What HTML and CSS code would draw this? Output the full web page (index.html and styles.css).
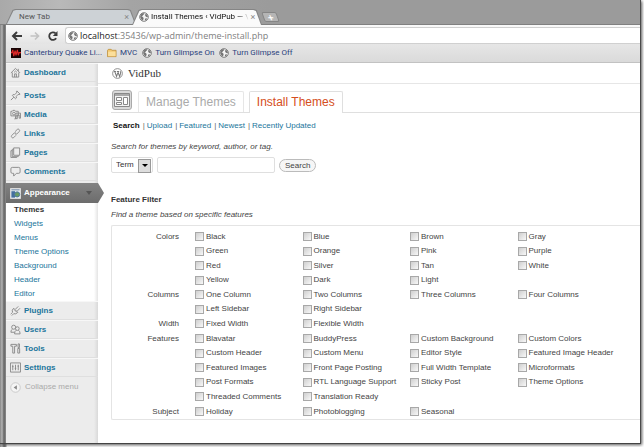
FILE: index.html
```html
<!DOCTYPE html>
<html lang="en">
<head>
<meta charset="utf-8">
<title>Install Themes ‹ VidPub — WordPress</title>
<link rel="stylesheet" href="styles.css">
</head>
<body>
<svg width="0" height="0" class="defs" aria-hidden="true">
  <symbol id="globe" viewBox="0 0 12 12">
    <circle cx="6" cy="6" r="5.2" fill="#f4f4f4" stroke="#6b6b6b" stroke-width="1"/>
    <path d="M2 3.2 4 1.6 6.4 1.5 6 3 4.6 3.6 4.4 5 2.8 5.3 5 6.4 5.6 8 4.4 10.4 2.6 8.6 1.4 6zM7.6 2 9.6 3 10.8 5.4 9.8 6.4 8.4 5.8 7.4 4.4zM8 7.4 9.8 7.8 8.6 9.8 7.4 10.2 7 8.6z" fill="#757575"/>
  </symbol>
</svg>
<div class="window">
  <header class="tabstrip">
    <div class="tab"><span>New Tab</span><button aria-label="Close New Tab">×</button></div>
    <div class="tab active"><svg class="ic"><use href="#globe"/></svg><span class="cut">Install Themes ‹ VidPub — \</span><button aria-label="Close tab">×</button></div>
    <button class="newtab" aria-label="New tab">+</button>
  </header>
  <div class="toolbar">
    <button aria-label="Back"><svg viewBox="0 0 12 12"><path d="M11 6H2.5M6 2 2 6l4 4" fill="none" stroke="#3c3c3c" stroke-width="2"/></svg></button>
    <button aria-label="Forward"><svg viewBox="0 0 12 12"><path d="M1.500 6H9M6 2.500 9.500 6 6 9.500" fill="none" stroke="#c2c2c2" stroke-width="1.700"/></svg></button>
    <button aria-label="Reload"><svg viewBox="0 0 12 12"><path d="M9.200 8.200A3.800 3.800 0 1 1 8.600 3.300" fill="none" stroke="#3c3c3c" stroke-width="1.800"/><path d="M10.500 1v5H5.800z" fill="#3c3c3c"/></svg></button>
    <div class="omnibox"><svg class="ic"><use href="#globe"/></svg><div class="url"><b>localhost</b>:35436/wp-admin/theme-install.php</div></div>
  </div>
  <nav class="bookmarks" aria-label="Bookmarks">
    <a href="#"><svg class="ic" viewBox="0 0 11 11"><path d="M0 0h11v11H0z" fill="#180404"/><path d="M0 5h1l1-3 1 7 1.500-6 1 5L7 2l1 6 1-3h2" fill="none" stroke="#e02828" stroke-width="1.300"/></svg>Canterbury Quake Li...</a>
    <a href="#"><svg class="ic" viewBox="0 0 11 11"><path d="M.5 9.500v-7l1-1h3l1 1h4.500v7z" fill="#f2c66c" stroke="#b98a35" stroke-width=".8"/><path d="M1.200 4h8.200v5H1.200z" fill="#fbdf9b"/></svg>MVC</a>
    <a href="#"><svg class="ic"><use href="#globe"/></svg>Turn Glimpse On</a>
    <a href="#"><svg class="ic"><use href="#globe"/></svg>Turn Glimpse Off</a>
  </nav>
  <div class="page">
    <nav class="menu" aria-label="Admin menu">
      <a href="#" class="item first"><svg viewBox="0 0 12 12"><path d="M1 6.500 6 1.500l5 5M2.500 6v5h7V6M5 11V7.500h2V11M9 2v2.500M4.500 5.800 6 4.400l1.500 1.400" /></svg>Dashboard</a>
      <a href="#" class="item"><svg viewBox="0 0 12 12"><path d="M7.500 1 11 4.500 9.800 5 8.800 4.800 6.800 7l.2 1.700-1 .8-3.500-3.500.8-1 1.700.2L7.200 3 7 2zM4.200 7.800 1 11"/></svg>Posts</a>
      <a href="#" class="item"><svg viewBox="0 0 12 12"><path d="M1 2.500h1.500l.7-1h2l.7 1H9v5H1zM6 8v2.800H4.800M6.500 10.500V4.500h5v5.500H10V6.500H8v4H6.500"/><circle cx="4.300" cy="5" r="1.500"/></svg>Media</a>
      <a href="#" class="item"><svg viewBox="0 0 12 12"><path d="M5.500 4 8 1.500q1-.8 2 .2t.2 2L7.500 6.500q-1 .8-2-.2M6.500 8 4 10.500q-1 .8-2-.2t-.2-2L4.500 5.500q1-.8 2 .2"/></svg>Links</a>
      <a href="#" class="item"><svg viewBox="0 0 12 12"><path d="M4 1h6.500v8H4zM4 2.500H2.500v8H9V9M2.500 4H1v7.500h6.500"/></svg>Pages</a>
      <a href="#" class="item"><svg viewBox="0 0 12 12"><path d="M2.500 1.500h7q1.500 0 1.500 1.500v3.500Q11 8 9.500 8H7l-3 3V8H2.500Q1 8 1 6.500V3q0-1.500 1.500-1.500z"/></svg>Comments</a>
      <a href="#" class="item current"><svg viewBox="0 0 12 12"><path d="M.5 .5h11v11H.5z" style="fill:#e8eef2;stroke:#ddd"/><path d="M1.500 3.500h4v7h-4z" style="fill:#436e9e;stroke:none"/><circle cx="7.800" cy="7" r="2.800" style="fill:#689b63;stroke:#4d76a5"/><path d="M1.500 2h9" style="stroke:#667f9c"/></svg>Appearance<i></i></a>
      <ul class="sub">
        <li><a href="#" class="on">Themes</a></li>
        <li><a href="#">Widgets</a></li>
        <li><a href="#">Menus</a></li>
        <li><a href="#">Theme Options</a></li>
        <li><a href="#">Background</a></li>
        <li><a href="#">Header</a></li>
        <li><a href="#">Editor</a></li>
      </ul>
      <a href="#" class="item"><svg viewBox="0 0 12 12"><path d="M4 3.500 8.500 8Q6.500 10.500 4 9.500L2 11.500M4 3.500Q1.500 5.500 2.800 8L.8 10M6 4.500l3-3M8 6.500l3-3M4.500 5l3 3"/></svg>Plugins</a>
      <a href="#" class="item"><svg viewBox="0 0 12 12"><circle cx="4" cy="3.500" r="2.200"/><circle cx="8" cy="5" r="2"/><path d="M2.800 5.500Q.8 6.500 1 9h4M6.800 6.800Q4.800 8 5 10.800h6Q11.200 8 9.200 6.800"/></svg>Users</a>
      <a href="#" class="item"><svg viewBox="0 0 12 12"><path d="M1 3.500V1.500h6v2H5v7.500H3V3.500zM8.800 1h1.500v4H8.800zM8.500 6h2v5h-2z"/></svg>Tools</a>
      <a href="#" class="item"><svg viewBox="0 0 12 12"><path d="M.5 1h11v10H.5zM3 3v6M6 3v6M9 3v6M2.200 5h1.600M5.200 7h1.600M8.200 4.500h1.600"/></svg>Settings</a>
      <button class="collapse"><svg viewBox="0 0 12 12"><circle cx="6" cy="6" r="5.200" style="fill:#f5f5f5;stroke:#c8c8c8"/><path d="M7.500 3.500v5L4 6z" style="fill:#888;stroke:none"/></svg>Collapse menu</button>
    </nav>
    <main>
      <div class="site"><svg viewBox="0 0 12 12"><circle cx="6" cy="6" r="5.300" fill="#fff" stroke="#777" stroke-width=".9"/><path d="M2 3.800h2.300M3 3.800l2 5.400L6.200 5.600M5.300 3.800h2.400M6.300 3.800l2 5.400L9.500 5.500Q9.500 4.400 8.800 3.500" fill="none" stroke="#777" stroke-width="1.100"/></svg>VidPub</div>
      <h1 class="heads">
        <svg viewBox="0 0 20 20"><rect x=".5" y=".5" width="19" height="19" rx="2.500" fill="#d9d9d9" stroke="#aaa"/><path d="M2.500 3.500h15v13h-15z" fill="#f4f4f4" stroke="#888"/><path d="M3 4h14v2H3z" fill="#aaa"/><path d="M4.500 7.500h5v3h-5zM4.500 12.500h5v2h-5zM11.500 7.500h4v7h-4z" fill="#fff" stroke="#888"/></svg>
        <a href="#">Manage Themes</a><a href="#" class="on">Install Themes</a>
      </h1>
      <ul class="views">
        <li><a href="#" class="on">Search</a></li><li><a href="#">Upload</a></li><li><a href="#">Featured</a></li><li><a href="#">Newest</a></li><li><a href="#">Recently Updated</a></li>
      </ul>
      <p>Search for themes by keyword, author, or tag.</p>
      <form class="search">
        <span class="drop"><select aria-label="Search type"><option>Term</option><option>Author</option><option>Tag</option></select></span>
        <input type="text" aria-label="Search themes">
        <button type="button">Search</button>
      </form>
      <h2>Feature Filter</h2>
      <p>Find a theme based on specific features</p>
      <div class="filter">
        <section><h3>Colors</h3><div class="opts">
          <label><input type="checkbox">Black</label><label><input type="checkbox">Blue</label><label><input type="checkbox">Brown</label><label><input type="checkbox">Gray</label>
          <label><input type="checkbox">Green</label><label><input type="checkbox">Orange</label><label><input type="checkbox">Pink</label><label><input type="checkbox">Purple</label>
          <label><input type="checkbox">Red</label><label><input type="checkbox">Silver</label><label><input type="checkbox">Tan</label><label><input type="checkbox">White</label>
          <label><input type="checkbox">Yellow</label><label><input type="checkbox">Dark</label><label><input type="checkbox">Light</label>
        </div></section>
        <section><h3>Columns</h3><div class="opts">
          <label><input type="checkbox">One Column</label><label><input type="checkbox">Two Columns</label><label><input type="checkbox">Three Columns</label><label><input type="checkbox">Four Columns</label>
          <label><input type="checkbox">Left Sidebar</label><label><input type="checkbox">Right Sidebar</label>
        </div></section>
        <section><h3>Width</h3><div class="opts">
          <label><input type="checkbox">Fixed Width</label><label><input type="checkbox">Flexible Width</label>
        </div></section>
        <section><h3>Features</h3><div class="opts">
          <label><input type="checkbox">Blavatar</label><label><input type="checkbox">BuddyPress</label><label><input type="checkbox">Custom Background</label><label><input type="checkbox">Custom Colors</label>
          <label><input type="checkbox">Custom Header</label><label><input type="checkbox">Custom Menu</label><label><input type="checkbox">Editor Style</label><label><input type="checkbox">Featured Image Header</label>
          <label><input type="checkbox">Featured Images</label><label><input type="checkbox">Front Page Posting</label><label><input type="checkbox">Full Width Template</label><label><input type="checkbox">Microformats</label>
          <label><input type="checkbox">Post Formats</label><label><input type="checkbox">RTL Language Support</label><label><input type="checkbox">Sticky Post</label><label><input type="checkbox">Theme Options</label>
          <label><input type="checkbox">Threaded Comments</label><label><input type="checkbox">Translation Ready</label>
        </div></section>
        <section><h3>Subject</h3><div class="opts">
          <label><input type="checkbox">Holiday</label><label><input type="checkbox">Photoblogging</label><label><input type="checkbox">Seasonal</label>
        </div></section>
      </div>
    </main>
  </div>
</div>
</body>
</html>
```
FILE: styles.css
```css
* { box-sizing: border-box; }
html { min-height: 100%; background: linear-gradient(90deg, #858585, #b4b4b4 2px, #636363 4px, #8c8c8c 6px, #fff 7px); }
body { margin: 0; font: 8px/14px "Liberation Sans", Arial, sans-serif; color: #444; }
a { color: #21759b; text-decoration: none; }
button { font: inherit; color: inherit; background: none; border: 0; padding: 0; }
ul, p, h1, h2, h3 { margin: 0; padding: 0; list-style: none; font-size: 8px; }
.defs { display: block; }
.ic { width: 10px; height: 10px; flex: none; }

.window {
  display: flex; flex-direction: column;
  min-height: calc(100vh - 3px);
  margin: 0 3px 3px 0; padding-left: 6px;
  border-right: 1px solid #4a4a4a; border-bottom: 1px solid #444;
  box-shadow: 1px 1px 3px #555;
}

.tabstrip {
  display: flex; align-items: flex-end;
  height: 25px; margin-left: -6px; padding-left: 6px;
  background: linear-gradient(90deg, #a9a9a9, #b9b9b9 60px, #a4a4a4 130px, #9b9b9b 270px, #9b9b9b);
  border-bottom: 1px solid #808080;
  font: 8px/14px Roboto, sans-serif;
}
.tab {
  position: relative; isolation: isolate;
  display: flex; align-items: center;
  width: 130px; height: 15px; padding: 0 7px 0 13px;
  color: #555;
}
.tab::before, .tab::after { content: ""; position: absolute; z-index: -1; inset: 0; clip-path: polygon(0 100%, 5% 6%, 7% 0, 94% 0, 96% 6%, 100% 100%); }
.tab::before { background: #858585; }
.tab::after { background: #cdd2d6; inset: 1px 1px 0; }
.tab span { flex: 1; }
.tab button { color: #888; font-size: 9px; line-height: 14px; }
.tab.active { height: 16px; margin: 0 0 -1px -4px; padding: 0 8px 0 7px; gap: 2px; color: #111; }
.tab.active::after { background: #fafafa; }
.cut { white-space: nowrap; mask-image: linear-gradient(90deg, #000 90%, transparent); }
.newtab { width: 15px; height: 10px; margin: 0 0 2px 1px; border: 1px solid #858585; border-radius: 2px; background: #b5b5b5; color: #fff; font: bold 10px/7px "Liberation Sans", sans-serif; transform: skewX(20deg); }

.toolbar { display: flex; align-items: center; height: 19px; padding: 2px 0 0 5px; gap: 6px; background: linear-gradient(#fafafa, #e4e4e4); }
.toolbar button { display: flex; }
.toolbar button svg { width: 12px; height: 12px; }
.omnibox { display: flex; align-items: center; flex: 1; height: 17px; padding-left: 2px; gap: 2px; background: #fff; border: 1px solid #d0d0d0; border-right: 0; border-radius: 3px 0 0 3px; }
.url { font: 9px/14px "Open Sans", sans-serif; color: #808080; }
.url b { font-weight: 400; color: #222; }

.bookmarks { display: flex; align-items: center; height: 19px; padding-left: 5px; gap: 5px; background: linear-gradient(#e6e6e6, #dadada); border-bottom: 1px solid #c2c2c2; font: 8px/14px Roboto, sans-serif; }
.bookmarks a { display: flex; align-items: center; gap: 3px; color: #2a3f7c; }

.page { flex: 1; display: grid; grid-template-columns: 92px 1fr; background: #fff; }

.menu { background: linear-gradient(90deg, #ececec 88px, #d9d9d9); }
.item { position: relative; display: flex; align-items: center; gap: 3px; height: 19px; padding-left: 4px; font-weight: 700; border-top: 1px solid #f7f7f7; border-bottom: 1px solid #dfdfdf; }
.menu svg { width: 11px; height: 11px; fill: none; stroke: #888; stroke-width: 1; }
.first { margin-bottom: 4px; }
.current { height: 20px; margin-top: 2px; color: #fff; background: linear-gradient(#838383, #6c6c6c); border: 0; }
.current::after { content: ""; position: absolute; left: 100%; top: 0; bottom: 0; width: 6px; background: linear-gradient(#838383, #6c6c6c); clip-path: polygon(0 0, 100% 50%, 0 100%); }
.current i { margin: 0 6px 0 auto; border: 3px solid transparent; border-top: 4px solid #555; border-bottom: 0; }
.sub { padding-left: 8px; background: linear-gradient(90deg, #fff 88px, #e4e4e4); }
.sub a { display: block; }
.sub .on { font-weight: 700; color: #333; }
.collapse { display: flex; align-items: center; gap: 4px; height: 20px; padding-left: 4px; color: #aaa; }

main { min-width: 0; padding-left: 13px; }
.site { display: flex; align-items: center; gap: 5px; height: 21px; margin-left: -13px; padding-left: 14px; border-bottom: 1px solid #e6e6e6; font: 11px/14px "Liberation Serif", Georgia, serif; color: #333; }
.site svg { width: 11px; height: 11px; }
.heads { display: flex; align-items: flex-end; height: 29px; border-bottom: 1px solid #dfdfdf; font: 400 12px/20px "Liberation Sans", Arial, sans-serif; }
.heads svg { width: 20px; height: 20px; margin: 0 6px 2px 1px; }
.heads a { padding: 0 7px; margin-right: 5px; border: 1px solid #e6e6e6; border-bottom: 0; border-radius: 2px 2px 0 0; color: #aaa; }
.heads .on { margin-bottom: -1px; padding-bottom: 1px; border-color: #dfdfdf; background: #fff; color: #d54e21; }
.views { display: flex; margin: 6px 0 7px 2px; }
.views li + li::before { content: "|"; margin: 0 2px 0 3px; color: #666; }
.views .on { font-weight: 700; color: #111; }
p { font-style: italic; }
.search { display: flex; align-items: center; margin: 3px 0 20px; gap: 4px; height: 16px; }
.drop { position: relative; display: flex; }
.drop::before { content: ""; position: absolute; right: 2px; top: 2px; width: 11px; height: 12px; border: 1px solid #999; background: #ddd; pointer-events: none; }
.drop::after { content: ""; position: absolute; right: 5px; top: 7px; border: 3px solid transparent; border-top-color: #000; border-bottom: 0; pointer-events: none; }
.search select, .search input { height: 16px; padding: 0 4px; border: 1px solid #dfdfdf; border-radius: 2px; background: #fff; font: inherit; color: #333; }
.search select { appearance: none; width: 42px; }
.search input { width: 118px; }
.search button { height: 13px; padding: 0 5px; line-height: 11px; border: 1px solid #bbb; border-radius: 7px; background: #f6f6f6; }
h2 { font-weight: 700; color: #333; line-height: 14px; margin-bottom: 1px; }
.filter { margin-top: 3px; padding: 3px 15px 0 0; border: 1px solid #e4e4e4; border-right: 0; border-radius: 2px 0 0 2px; }
.filter section { display: grid; grid-template-columns: 67px 1fr; column-gap: 16px; }
.filter h3 { font-weight: 400; line-height: 15px; text-align: right; }
.opts { display: grid; grid-template-columns: repeat(4, 1fr); grid-auto-rows: 15px 14px; }
.opts label { display: flex; align-items: center; gap: 2px; white-space: nowrap; }
.opts input { appearance: none; flex: none; width: 9px; height: 9px; margin: 0; border: 1px solid #a8a8a8; background: linear-gradient(135deg, #cfcfcf, #f8f8f8); }
```
